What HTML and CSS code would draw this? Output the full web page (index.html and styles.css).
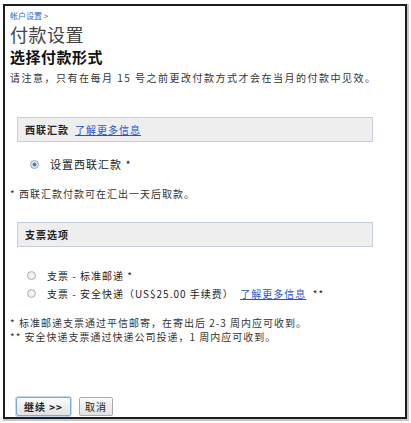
FILE: index.html
```html
<!DOCTYPE html>
<html lang="zh-CN">
<head>
<meta charset="utf-8">
<link rel="stylesheet" href="styles.css">
</head>
<body>
<div class="frame">
  <div class="crumb"><a href="#">帐户设置</a> &gt;</div>
  <h1 class="title">付款设置</h1>
  <h2 class="subtitle">选择付款形式</h2>
  <p class="notice">请注意，只有在每月 15 号之前更改付款方式才会在当月的付款中见效。</p>

  <div class="section-box"><b>西联汇款</b> <a href="#" class="link">了解更多信息</a></div>
  <div class="option first"><span class="radio checked"></span><span class="opt-text">设置西联汇款 *</span></div>
  <p class="note note-wu">* 西联汇款付款可在汇出一天后取款。</p>

  <div class="section-box"><b>支票选项</b></div>
  <div class="options">
    <div class="option"><span class="radio"></span><span class="opt-text">支票 - 标准邮递 *</span></div>
    <div class="option"><span class="radio"></span><span class="opt-text">支票 - 安全快递（US$25.00 手续费）&nbsp; <a href="#" class="link">了解更多信息</a> &nbsp;**</span></div>
  </div>
  <div class="footnotes">
    <p>* 标准邮递支票通过平信邮寄，在寄出后 2-3 周内应可收到。</p>
    <p>** 安全快递支票通过快递公司投递，1 周内应可收到。</p>
  </div>

  <div class="buttons">
    <button class="btn primary">继续 &gt;&gt;</button>
    <button class="btn">取消</button>
  </div>
</div>
</body>
</html>
```

FILE: styles.css
```css
html, body {
  margin: 0;
  padding: 0;
  background: #fff;
}
body {
  font-family: "Noto Sans CJK SC", "Noto Sans", sans-serif;
  color: #222;
  width: 411px;
  height: 423px;
  overflow: hidden;
}
.frame {
  margin: 4px 0 0 3px;
  width: 404px;
  height: 415px;
  box-sizing: border-box;
  border: 2px solid #1e1e1e;
  box-shadow: 1px 1px 0 1px #c8c8c8;
  padding: 5px 0 0 5px;
  display: flex;
  flex-direction: column;
}
.crumb {
  font-size: 8px;
  line-height: 10px;
  color: #555;
}
.crumb a {
  color: #3366cc;
  text-decoration: none;
}
.title {
  margin: 3px 0 0;
  font-size: 18px;
  line-height: 20px;
  font-weight: normal;
  color: #444;
  letter-spacing: 0.5px;
}
.subtitle {
  margin: 4px 0 0;
  font-size: 15px;
  line-height: 18px;
  font-weight: bold;
  color: #111;
  letter-spacing: 0.5px;
}
.notice {
  margin: 5px 0 0;
  font-size: 10px;
  line-height: 14px;
  letter-spacing: 1.5px;
  color: #333;
}
.section-box {
  margin: 32px 32px 0 7px;
  height: 25px;
  box-sizing: border-box;
  background: #eeeeee;
  border: 1px solid #c6d0da;
  padding: 0 7px;
  display: flex;
  align-items: center;
  gap: 6px;
  font-size: 10px;
  letter-spacing: 1px;
  color: #222;
}
.section-box b {
  font-weight: bold;
}
.link {
  color: #2255cc;
  text-decoration: underline;
  font-size: 10px;
}
.option {
  display: flex;
  align-items: center;
  height: 18px;
  font-size: 10px;
  letter-spacing: 1px;
  color: #222;
  padding-left: 17px;
}
.option.first {
  margin-top: 13px;
  padding-left: 20px;
  font-size: 11px;
}
.radio {
  width: 7px;
  height: 7px;
  border-radius: 50%;
  border: 1px solid #b0b0b0;
  background: radial-gradient(circle, #fafafa 0, #e4e4e4 100%);
  margin-right: 11px;
  flex: none;
}
.radio.checked {
  border-color: #8fa7c0;
  background: radial-gradient(circle, #4b7fb0 0, #4b7fb0 35%, #d8e4ef 45%, #eef3f8 100%);
}
.note {
  margin: 14px 0 0;
  font-size: 10px;
  line-height: 14px;
  letter-spacing: 1px;
  color: #333;
}
.note-wu + .section-box {
  margin-top: 21px;
}
.options {
  margin-top: 19px;
}
.footnotes {
  margin-top: 14px;
  font-size: 10px;
  line-height: 14px;
  letter-spacing: 1px;
  color: #333;
}
.footnotes p {
  margin: 0;
}
.buttons {
  margin-top: auto;
  margin-bottom: 1px;
  margin-left: 6px;
  display: flex;
  gap: 8px;
}
.btn {
  font-family: "Noto Sans CJK SC", "Noto Sans", sans-serif;
  font-size: 10px;
  letter-spacing: 1px;
  height: 19px;
  padding: 0 5px;
  border: 1px solid #a9a9a9;
  border-radius: 2px;
  background: linear-gradient(#fbfbfb, #e2e2e2);
  color: #222;
  line-height: 17px;
}
.btn.primary {
  width: 55px;
  font-weight: bold;
  border: 1px solid #7fa8cf;
  box-shadow: 0 0 0 1px #c4daee;
}
```
